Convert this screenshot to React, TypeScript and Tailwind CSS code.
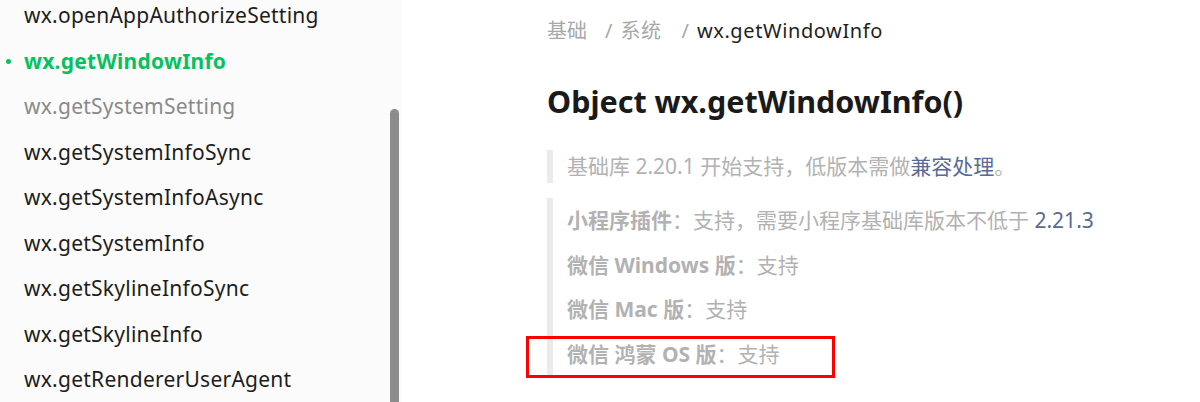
import React from 'react';

const apis = [
  { name: 'wx.openAppAuthorizeSetting' },
  { name: 'wx.getWindowInfo', active: true },
  { name: 'wx.getSystemSetting', muted: true },
  { name: 'wx.getSystemInfoSync' },
  { name: 'wx.getSystemInfoAsync' },
  { name: 'wx.getSystemInfo' },
  { name: 'wx.getSkylineInfoSync' },
  { name: 'wx.getSkylineInfo' },
  { name: 'wx.getRendererUserAgent' },
];

const font = { fontFamily: '"Noto Sans", "Noto Sans CJK SC", sans-serif' };

function Sidebar() {
  return (
    <div className="flex w-[402px] shrink-0 bg-[#fbfbfb] overflow-hidden">
      <ul className="flex-1 -mt-[7px]">
        {apis.map((api) => (
          <li
            key={api.name}
            className={
              'relative pl-6 text-[21px] tracking-[0.25px] leading-[45.5px] whitespace-nowrap ' +
              (api.active
                ? 'text-[#07c160] font-bold'
                : api.muted
                ? 'text-[#8a8a8a]'
                : 'text-[#1d1d1d]')
            }
          >
            {api.active && (
              <span className="absolute left-[6px] top-[20px] w-[5px] h-[5px] rounded-full bg-[#07c160]" />
            )}
            {api.name}
          </li>
        ))}
      </ul>
      <div className="w-[12px] pr-[3px] pt-[109px]">
        <div className="h-full w-[9px] rounded-t-full bg-[#8c8c8c]" />
      </div>
    </div>
  );
}

function Content() {
  return (
    <div className="flex-1 pl-[145px] pt-[17px]">
      <div className="flex items-center text-[20px] leading-[28px] text-[#a8a8a8]">
        <span>基础</span>
        <span className="ml-[18px] mr-[8px]">/</span>
        <span className="tracking-[0.5px]">系统</span>
        <span className="ml-[20px] mr-[8px]">/</span>
        <span className="text-[#1f1f1f] tracking-[0.6px]">wx.getWindowInfo</span>
      </div>
      <h1 className="mt-[36px] text-[30.5px] leading-[40px] font-bold text-[#1a1a1a]">
        Object wx.getWindowInfo()
      </h1>
      <blockquote className="mt-[29px] border-l-[6px] border-[#ebebeb] pl-[14px] text-[21px] leading-[33px] text-[#b2b2b2]">
        基础库 2.20.1 开始支持，低版本需做<span className="text-[#576b95]">兼容处理</span>。
      </blockquote>
      <blockquote className="mt-[21px] border-l-[6px] border-[#ebebeb] pl-[14px] text-[21px] leading-[44.5px] text-[#b2b2b2]">
        <div className="-mt-[6px]">
          <b>小程序插件</b>：支持，需要小程序基础库版本不低于 <span className="text-[#576b95]">2.21.3</span>
        </div>
        <div>
          <b>微信 Windows 版</b>：支持
        </div>
        <div>
          <b>微信 Mac 版</b>：支持
        </div>
        <div className="relative">
          <b>微信 鸿蒙 OS 版</b>：支持
          <span className="absolute left-[-41px] top-[4px] w-[309px] h-[42px] border-[3px] border-[#ff0000]" />
        </div>
      </blockquote>
    </div>
  );
}

export default function App() {
  return (
    <div className="flex w-[1200px] h-[402px] bg-white overflow-hidden" style={font}>
      <Sidebar />
      <Content />
    </div>
  );
}
